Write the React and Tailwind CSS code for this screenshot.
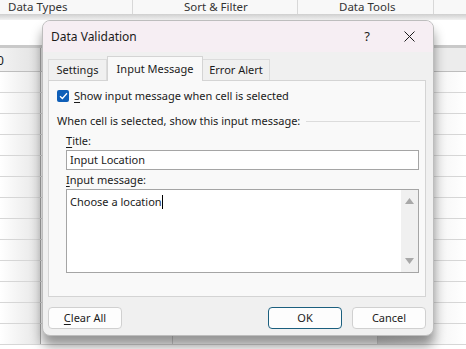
import React from 'react';

const font = { fontFamily: '"Noto Sans", "Liberation Sans", sans-serif' };

const GridRow = () => (
  <div className="flex h-[21px] border-b border-[#d6d6d6]">
    <div className="w-[41px] border-r border-[#a9a9a9] bg-gradient-to-r from-white to-[#e6e6e6]" />
    <div className="w-[132px] border-r border-[#d6d6d6] bg-white" />
    <div className="w-[205px] border-r border-[#d6d6d6] bg-white" />
    <div className="flex-1 bg-gradient-to-r from-[#e2e2e2] to-white" />
  </div>
);

const Underlined = ({ first, rest }) => (
  <span>
    <span className="underline underline-offset-2">{first}</span>
    {rest}
  </span>
);

const Btn = ({ children, primary, className = '' }) => (
  <button
    className={`h-[22px] w-[74px] rounded-[4px] bg-[#fdfdfd] text-[11px] text-[#1b1b1b] ${
      primary ? 'border border-[#1b5f7e]' : 'border border-[#d0d0d0]'
    } ${className}`}
  >
    {children}
  </button>
);

export default function App() {
  return (
    <div className="relative h-[349px] w-[466px] overflow-hidden bg-white text-[11px] text-[#1b1b1b]" style={font}>
      {/* ribbon group labels */}
      <div className="flex h-[14px] items-center bg-[#f8f8f8] text-[11.5px] text-[#333]">
        <div className="h-[14px] w-[133px] border-r border-[#d8d8d8] pl-[8px] leading-[13px]">Data Types</div>
        <div className="h-[14px] w-[165px] border-r border-[#d8d8d8] pl-[51px] leading-[13px]">Sort &amp; Filter</div>
        <div className="h-[14px] w-[136px] border-r border-[#d8d8d8] pl-[41px] leading-[13px]">Data Tools</div>
        <div className="flex-1" />
      </div>
      <div className="h-[6px] bg-gradient-to-b from-[#cfcfcf] to-[#f2f2f2]" />
      {/* formula bar area */}
      <div className="h-[28px] border-b-[3px] border-[#c9c9c9] bg-white" />
      {/* column header */}
      <div className="flex h-[24px] border-b border-[#bdbdbd] bg-[#ececec]">
        <div className="relative w-[41px] overflow-hidden border-r border-[#a9a9a9] bg-gradient-to-r from-[#f2f2f2] to-[#e2e2e2]">
          <span className="absolute left-[-3px] top-[4px] text-[12px]">0</span>
        </div>
        <div className="flex-1" />
      </div>
      {Array.from({ length: 13 }).map((_, i) => (
        <GridRow key={i} />
      ))}

      {/* Data Validation dialog */}
      <div className="absolute left-[42px] top-[20px] flex h-[316px] w-[392px] flex-col overflow-hidden rounded-[8px] border border-[#bdbdbd] bg-[#f0f0f0] shadow-[0_10px_12px_rgba(0,0,0,0.42)]">
        <div className="flex h-[31px] shrink-0 items-center bg-[#f6eef3] pl-[8px] pr-[14px]">
          <span className="flex-1 text-[12px]">Data Validation</span>
          <span className="mr-[34px] text-[13px]">?</span>
          <svg width="11" height="11" viewBox="0 0 11 11" className="mr-[4px]">
            <path d="M0.5 0.5 L10.5 10.5 M10.5 0.5 L0.5 10.5" stroke="#1b1b1b" strokeWidth="1" />
          </svg>
        </div>

        <div className="flex flex-col px-[5px]">
          {/* tabs */}
          <div className="mt-[4px] flex h-[24px] items-end">
            <div className="flex h-[21px] w-[59px] items-center justify-center border border-b-0 border-[#dcdcdc] bg-[#f0f0f0]">Settings</div>
            <div className="relative z-10 -mb-px flex h-[25px] w-[96px] items-center justify-center border border-b-0 border-[#d4d4d4] bg-[#f9f9f9]">Input Message</div>
            <div className="flex h-[21px] w-[67px] items-center justify-center border border-b-0 border-l-0 border-[#dcdcdc] bg-[#f0f0f0]">Error Alert</div>
          </div>

          {/* panel */}
          <div className="flex h-[217px] w-[378px] flex-col border border-[#d4d4d4] bg-[#f9f9f9] pl-[8px] pr-[5px]">
            <div className="mt-[7px] flex h-[16px] items-center">
              <span className="flex h-[12px] w-[12px] items-center justify-center rounded-[2px] bg-[#0f5fb8]">
                <svg width="9" height="8" viewBox="0 0 9 8">
                  <path d="M1 4.2 L3.4 6.5 L8 1.3" fill="none" stroke="white" strokeWidth="1.3" />
                </svg>
              </span>
              <span className="ml-[5px]">
                <Underlined first="S" rest="how input message when cell is selected" />
              </span>
            </div>

            <div className="mt-[9px] flex h-[16px] items-center">
              <span>When cell is selected, show this input message:</span>
              <div className="ml-[6px] h-px flex-1 bg-[#dcdcdc]" />
            </div>

            <div className="ml-[9px] mr-[1px] flex flex-col">
              <div className="mt-[4px] h-[16px] leading-[16px]">
                <Underlined first="T" rest="itle:" />
              </div>
              <div className="mt-px flex h-[20px] items-center border border-[#a5a5a5] bg-white pl-[3px]">Input Location</div>
              <div className="mt-[2px] h-[16px] leading-[16px]">
                <Underlined first="I" rest="nput message:" />
              </div>
              <div className="mt-px flex h-[84px] border border-[#a5a5a5] bg-white">
                <div className="flex-1 pl-[3px] pt-[2px] leading-[16px]">
                  Choose a location
                  <span className="inline-block h-[14px] w-px translate-y-[3px] bg-black" />
                </div>
                <div className="flex w-[17px] flex-col items-center justify-between bg-[#f0f0f0] py-[8px]">
                  <svg width="9" height="6" viewBox="0 0 9 6"><path d="M4.5 0 L9 6 L0 6 Z" fill="#a8a8a8" /></svg>
                  <svg width="9" height="6" viewBox="0 0 9 6"><path d="M0 0 L9 0 L4.5 6 Z" fill="#a8a8a8" /></svg>
                </div>
              </div>
            </div>
          </div>

          {/* buttons */}
          <div className="mt-[10px] flex items-center">
            <Btn>
              <Underlined first="C" rest="lear All" />
            </Btn>
            <div className="flex-1" />
            <Btn primary className="mr-[10px]">OK</Btn>
            <Btn className="mr-[2px]">Cancel</Btn>
          </div>
        </div>
      </div>
    </div>
  );
}
